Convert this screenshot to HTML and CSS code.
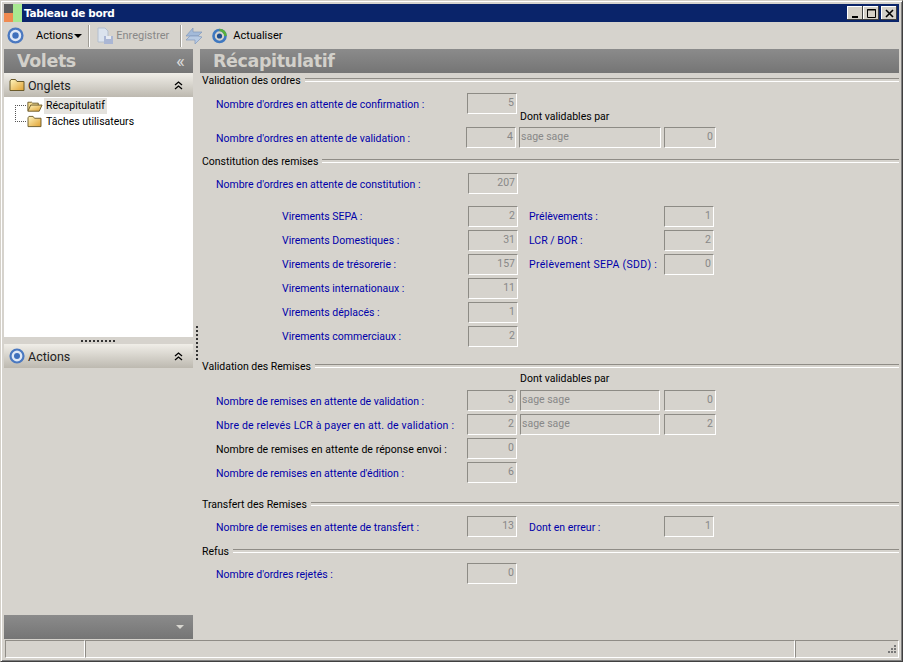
FILE: index.html
```html
<!DOCTYPE html>
<html lang="fr">
<head>
<meta charset="utf-8">
<title>Tableau de bord</title>
<link rel="stylesheet" href="styles.css">
</head>
<body>
<svg class="defs" width="0" height="0">
  <defs>
    <linearGradient id="fold" x1="0" y1="0" x2="1" y2="1"><stop offset="0" stop-color="#fff6c0"/><stop offset="1" stop-color="#e0a030"/></linearGradient>
    <symbol id="folder" viewBox="0 0 16 14"><path d="M1 3V12.500H15V3.500H8L6.500 1.500H2Z" fill="url(#fold)" stroke="#6b5a2a"/></symbol>
    <symbol id="folder-open" viewBox="0 0 18 12"><path d="M2 11V2H6L7 3H13V5" fill="#f6dc90" stroke="#6b5a2a"/><path d="M2 11.500L5 5H17L14 11.500Z" fill="url(#fold)" stroke="#6b5a2a"/></symbol>
    <symbol id="target" viewBox="0 0 16 16"><circle cx="8" cy="8" r="6.500" fill="#dfe8f6" stroke="#4a78c0" stroke-width="2.200"/><circle cx="8" cy="8" r="3" fill="#3f70bc"/></symbol>
    <symbol id="chev2" viewBox="0 0 9 9"><path d="M1 4L4.500 1L8 4M1 8L4.500 5L8 8" fill="none" stroke="#000" stroke-width="1.300"/></symbol>
  </defs>
</svg>
<div class="window">
  <header class="titlebar">
    <svg class="app-icon" width="18" height="18" viewBox="0 0 18 18"><rect width="9" height="9" fill="#5c5c5c"/><rect x="9" width="9" height="18" fill="#a8e890"/><rect y="9" width="9" height="9" fill="#f08a50"/></svg>
    <span class="title-text">Tableau de bord</span>
    <div class="win-btns">
      <span class="win-btn"><svg width="11" height="11" viewBox="0 0 11 11"><rect x="2" y="8" width="6" height="2"/></svg></span>
      <span class="win-btn"><svg width="11" height="11" viewBox="0 0 11 11"><path d="M1.500 1.500H9.500V9.500H1.500Z M1 2H10" fill="none" stroke="#000"/></svg></span>
      <span class="win-btn win-close"><svg width="11" height="11" viewBox="0 0 11 11"><path d="M2 2L9 9M9 2L2 9" stroke="#000" stroke-width="1.600"/></svg></span>
    </div>
  </header>
  <nav class="toolbar">
    <svg class="tb-target" width="17" height="17"><use href="#target"/></svg>
    <span class="tb-item tb-actions">Actions<i class="caret"></i></span>
    <span class="tb-sep"></span>
    <svg class="tb-save" width="18" height="18" viewBox="0 0 18 18"><path d="M2 1H9L12 4V15H2Z" fill="#dbe3ee" stroke="#b4bfce"/><rect x="8" y="9" width="9" height="8" fill="#aab6d4"/><rect x="10" y="9" width="5" height="3" fill="#e6eaf2"/></svg>
    <span class="tb-item tb-disabled">Enregistrer</span>
    <span class="tb-sep tb-sep2"></span>
    <svg class="tb-sync" width="18" height="20" viewBox="0 0 18 20"><path d="M1 10L8 2V6H17L13 10H5Z" fill="#a3bad9" stroke="#8199bb" stroke-width=".7"/><path d="M17 11L10 18V14H1L5 10H13Z" fill="#b7cae3" stroke="#8199bb" stroke-width=".7"/></svg>
    <svg class="tb-refresh" width="17" height="17" viewBox="0 0 17 17"><circle cx="8.500" cy="9" r="6" fill="none" stroke="#3f78c0" stroke-width="2.600"/><circle cx="8.500" cy="9" r="2.600" fill="#1f4f8f"/><path d="M8.500 3A6 6 0 0 1 14.500 9" fill="none" stroke="#57b03c" stroke-width="2.600"/></svg>
    <span class="tb-item">Actualiser</span>
  </nav>
  <div class="workspace">
    <aside class="side">
      <div class="band band-dark"><span class="band-title">Volets</span><span class="collapse">«</span></div>
      <div class="pane-head"><svg class="ph-icon" width="16" height="14"><use href="#folder"/></svg><span class="ph-title">Onglets</span><svg class="ph-chev" width="9" height="9"><use href="#chev2"/></svg></div>
      <div class="tree">
        <div class="tree-item"><span class="dots"></span><svg class="ti-icon" width="17" height="12"><use href="#folder-open"/></svg><span class="tree-label tree-selected">Récapitulatif</span></div>
        <div class="tree-item"><span class="dots"></span><svg class="ti-icon" width="17" height="13"><use href="#folder"/></svg><span class="tree-label">Tâches utilisateurs</span></div>
      </div>
      <div class="grip"><span class="grip-dots"></span></div>
      <div class="pane-head"><svg class="ph-icon" width="16" height="16"><use href="#target"/></svg><span class="ph-title">Actions</span><svg class="ph-chev" width="9" height="9"><use href="#chev2"/></svg></div>
      <div class="side-fill"></div>
      <div class="band-bottom"><i class="caret caret-light"></i></div>
    </aside>
    <div class="splitter"><span class="split-dots"></span></div>
    <main class="main">
      <div class="band band-dark band-main"><span class="band-title">Récapitulatif</span></div>
      <div class="form">
        <section class="sec">
          <h2 class="legend"><span>Validation des ordres</span></h2>
          <div class="row r-first"><span class="lbl">Nombre d'ordres en attente de confirmation :</span><span class="fld f-a">5</span></div>
          <div class="row r-gap13"><span class="lbl">Nombre d'ordres en attente de validation :</span><span class="fld f-b">4</span>
            <span class="fld fld-text f-user"><span class="above">Dont validables par</span>sage sage</span><span class="fld f-end">0</span></div>
        </section>
        <section class="sec s-const">
          <h2 class="legend"><span>Constitution des remises</span></h2>
          <div class="row r-c1"><span class="lbl">Nombre d'ordres en attente de constitution :</span><span class="fld f-c">207</span></div>
          <div class="row r-c2"><span class="lbl lbl-sub">Virements SEPA :</span><span class="fld f-c">2</span><span class="lbl lbl-right">Prélèvements :</span><span class="fld f-r">1</span></div>
          <div class="row r-next"><span class="lbl lbl-sub">Virements Domestiques :</span><span class="fld f-c">31</span><span class="lbl lbl-right">LCR / BOR :</span><span class="fld f-r">2</span></div>
          <div class="row r-next"><span class="lbl lbl-sub">Virements de trésorerie :</span><span class="fld f-c">157</span><span class="lbl lbl-right lbl-wide">Prélèvement SEPA (SDD) :</span><span class="fld f-r">0</span></div>
          <div class="row r-next"><span class="lbl lbl-sub">Virements internationaux :</span><span class="fld f-c">11</span></div>
          <div class="row r-next"><span class="lbl lbl-sub">Virements déplacés :</span><span class="fld f-c">1</span></div>
          <div class="row r-next"><span class="lbl lbl-sub">Virements commerciaux :</span><span class="fld f-c">2</span></div>
        </section>
        <section class="sec s-rem">
          <h2 class="legend"><span>Validation des Remises</span></h2>
          <div class="row r-rem1"><span class="lbl">Nombre de remises en attente de validation :</span><span class="fld f-a">3</span>
            <span class="fld fld-text f-user2"><span class="above above-2">Dont validables par</span>sage sage</span><span class="fld f-end2">0</span></div>
          <div class="row r-next"><span class="lbl lbl-long">Nbre de relevés LCR à payer en att. de validation :</span><span class="fld f-a">2</span>
            <span class="fld fld-text f-user2">sage sage</span><span class="fld f-end2">2</span></div>
          <div class="row r-next"><span class="lbl lbl-black">Nombre de remises en attente de réponse envoi :</span><span class="fld f-a">0</span></div>
          <div class="row r-next"><span class="lbl">Nombre de remises en attente d'édition :</span><span class="fld f-a">6</span></div>
        </section>
        <section class="sec s-trans">
          <h2 class="legend"><span>Transfert des Remises</span></h2>
          <div class="row r-t1"><span class="lbl">Nombre de remises en attente de transfert :</span><span class="fld f-a">13</span><span class="lbl lbl-right2">Dont en erreur :</span><span class="fld f-r2">1</span></div>
        </section>
        <section class="sec s-refus">
          <h2 class="legend"><span>Refus</span></h2>
          <div class="row r-t2"><span class="lbl">Nombre d'ordres rejetés :</span><span class="fld f-a">0</span></div>
        </section>
      </div>
    </main>
  </div>
  <footer class="status">
    <span class="st st-1"></span><span class="st st-2"></span><span class="st st-3"><svg class="resize" width="12" height="12" viewBox="0 0 12 12" fill="#777"><rect x="9" y="1" width="2" height="2"/><rect x="6" y="4" width="2" height="2"/><rect x="9" y="4" width="2" height="2"/><rect x="3" y="7" width="2" height="2"/><rect x="6" y="7" width="2" height="2"/><rect x="9" y="7" width="2" height="2"/></svg></span>
  </footer>
</div>
</body>
</html>
```
FILE: styles.css
```css
* { box-sizing: border-box; }
html, body { margin: 0; height: 100%; overflow: hidden; }
body { font-family: Roboto, "Liberation Sans", Arial, sans-serif; font-size: 10.500px; background: #d4d0c8; color: #000; }
.defs { position: absolute; }
.window { width: 903px; height: 662px; background: #d6d3cd; border: 1px solid #404040; border-top-color: #d4d0c8; border-left-color: #d4d0c8; padding: 3px; box-shadow: inset 1px 1px 0 #fff, inset -1px -1px 0 #808080; display: flex; flex-direction: column; }
.titlebar { height: 18px; flex: none; background: #0a246a; display: flex; align-items: center; }
.app-icon { flex: none; margin-right: 2px; }
.title-text { color: #fff; font: bold 10.500px "DejaVu Sans", sans-serif; letter-spacing: -.3px; }
.win-btns { margin-left: auto; display: flex; margin-right: 2px; }
.win-btn { width: 16px; height: 14px; background: #d4d0c8; box-shadow: inset -1px -1px 0 #404040, inset 1px 1px 0 #fff; display: flex; align-items: center; justify-content: center; }
.win-close { margin-left: 2px; }
.toolbar { height: 27px; flex: none; display: flex; align-items: center; padding-left: 3px; font-size: 11px; }
.tb-target { flex: none; }
.tb-item { white-space: nowrap; }
.tb-actions { margin-left: 12px; }
.caret { display: inline-block; width: 0; height: 0; border-left: 4px solid transparent; border-right: 4px solid transparent; border-top: 4px solid #000; margin-left: 1px; vertical-align: 1px; }
.tb-sep { width: 2px; height: 22px; background: #fff; border-left: 1px solid #a09d96; margin-left: 6px; }
.tb-save { margin-left: 6px; flex: none; }
.tb-disabled { color: #888; margin-left: 2px; }
.tb-sep2 { margin-left: 11px; }
.tb-sync { margin-left: 3px; flex: none; }
.tb-refresh { margin-left: 8px; margin-right: 5px; flex: none; }
.workspace { flex: 1; min-height: 0; display: flex; }
.side { width: 189px; flex: none; display: flex; flex-direction: column; }
.band { height: 24px; flex: none; background: linear-gradient(#8b8b8b, #757575); display: flex; align-items: center; justify-content: space-between; }
.band-title { font: bold 17.500px "DejaVu Sans", sans-serif; color: #d2d0ca; letter-spacing: -.4px; padding-left: 13px; }
.collapse { color: #d8d8d8; font-size: 19px; padding-right: 8px; line-height: 20px; }
.pane-head { height: 24px; flex: none; background: linear-gradient(#f0eee8, #bdb9b0); display: flex; align-items: center; padding-left: 5px; }
.ph-icon { flex: none; }
.ph-title { margin-left: 3px; font-size: 12.500px; color: #222; }
.ph-chev { margin-left: auto; margin-right: 10px; }
.tree { height: 240px; flex: none; background: #fff; }
.tree-item { height: 17px; display: flex; align-items: center; position: relative; }
.tree-item + .tree-item { margin-top: -1px; }
.dots { width: 11px; margin-left: 11px; border-top: 1px dotted #555; flex: none; }
.tree-item + .tree-item .dots::before { content: ""; position: absolute; left: 11px; top: -8px; height: 17px; border-left: 1px dotted #555; }
.ti-icon { flex: none; }
.tree-label { margin-left: 1px; padding: 0 2px; line-height: 16px; }
.tree-selected { background: #e4e2dd; }
.grip { height: 7px; flex: none; display: flex; justify-content: center; align-items: center; }
.grip-dots { width: 36px; height: 2px; background: repeating-linear-gradient(90deg, #333 0 2px, transparent 2px 4px); }
.side-fill { flex: 1; }
.band-bottom { height: 24px; flex: none; background: linear-gradient(#8b8b8b, #757575); display: flex; align-items: center; justify-content: flex-end; padding-right: 9px; }
.caret-light { border-top-color: #d8d6d0; }
.splitter { width: 7px; flex: none; position: relative; }
.split-dots { position: absolute; left: 3px; top: 277px; width: 2px; height: 36px; background: repeating-linear-gradient(#333 0 2px, transparent 2px 4px); }
.main { flex: 1; min-width: 0; display: flex; flex-direction: column; }
.band-main { width: 699px; }
.form { padding-left: 2px; flex: 1; }
.sec { display: block; }
.legend { margin: 0; height: 14px; font-size: 10.500px; font-weight: normal; line-height: 14px; display: flex; align-items: center; white-space: nowrap; }
.legend span { padding-top: 1px; }
.legend::after { content: ""; flex: 1; height: 2px; margin-left: 4px; border-top: 1px solid #8f8c86; border-bottom: 1px solid #fff; }
.row { position: relative; height: 21px; display: flex; align-items: center; padding-left: 14px; margin-top: 3px; }
.lbl { color: #00a; white-space: nowrap; width: 251px; flex: none; margin-top: 2px; }
.lbl-black { color: #000; letter-spacing: .06px; }
.lbl-long { letter-spacing: .18px; }
.lbl-sub { padding-left: 66px; width: 251px; margin-top: 0; }
.lbl-right { color: #00a; margin-left: 11px; width: 135px; margin-top: 0; }
.lbl-wide { letter-spacing: .3px; }
.lbl-right2 { margin-left: 12px; width: 135px; }
.fld { flex: none; display: block; height: 21px; line-height: 18px; width: 50px; background: #d6d3cd; border: 1px solid; border-color: #8d8b85 #fff #fff #8d8b85; text-align: right; padding: 0 2px 0 0; color: #888; position: relative; }
.fld-text { text-align: left; padding: 0 0 0 1px; }
.above { position: absolute; left: 0; top: -20px; color: #000; white-space: nowrap; }
.above-2 { top: -21px; left: -1px; }
.f-a { margin-left: 0; }
.f-b { margin-left: -1px; }
.f-c { margin-left: 1px; }
.f-user { width: 142px; margin-left: 3px; }
.f-end { width: 52px; margin-left: 3px; }
.f-user2 { width: 140px; margin-left: 3px; }
.f-end2 { width: 52px; margin-left: 4px; }
.f-r { margin-left: 0; }
.f-r2 { margin-left: 0; }
.r-first { margin-top: 6px; }
.r-gap13 { margin-top: 13px; }
.s-const { margin-top: 6px; }
.r-c1 { margin-top: 5px; }
.r-c2 { margin-top: 12px; }
.s-rem { margin-top: 12px; }
.r-rem1 { margin-top: 17px; }
.s-trans { margin-top: 14px; }
.r-t1 { margin-top: 5px; }
.s-refus { margin-top: 7px; }
.r-t2 { margin-top: 5px; }
.status { height: 18px; margin-top: 1px; flex: none; display: flex; }
.st { height: 18px; border: 1px solid; border-color: #8f8c86 #fff #fff #8f8c86; position: relative; }
.st-1 { width: 80px; margin-left: 1px; }
.st-2 { flex: 1; margin-left: 0; }
.st-3 { width: 104px; }
.resize { position: absolute; right: 1px; bottom: 1px; }
```
